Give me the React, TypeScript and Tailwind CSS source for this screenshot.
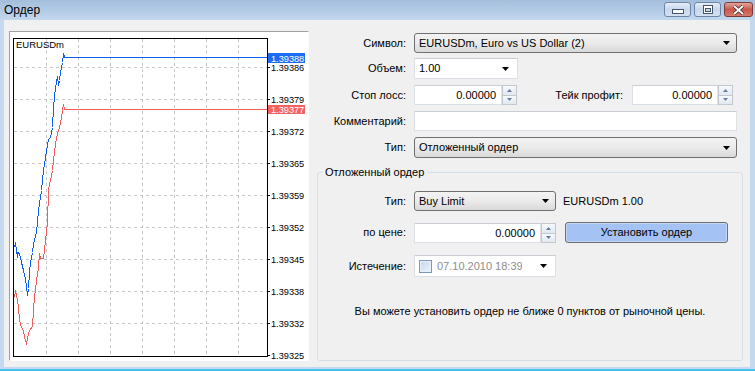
import clsx from 'clsx'

const blue: [number, number][] = [
  [14, 247], [15, 242], [16, 250], [17, 257], [17, 252], [19, 253], [21, 262], [23, 270], [25, 278], [27, 295],
  [28, 288], [29, 272], [30, 262], [32, 252], [33, 243], [36, 232], [38, 210], [41, 190], [42, 180], [43, 170],
  [45, 157], [48, 139], [50, 137], [52, 127], [53, 107], [55, 87], [57, 76], [58, 85], [59, 80], [60, 72],
  [62, 62], [63, 53], [64, 57], [267, 57],
]

const red: [number, number][] = [
  [14, 297], [15, 290], [16, 295], [17, 300], [18, 307], [19, 320], [21, 327], [23, 330], [24, 337], [26, 343],
  [28, 333], [30, 328], [32, 327], [33, 308], [34, 297], [36, 280], [38, 267], [39, 253], [40, 258], [43, 258],
  [45, 240], [47, 222], [48, 190], [49, 183], [50, 180], [52, 170], [53, 160], [55, 143], [57, 133], [58, 130],
  [60, 123], [62, 110], [63, 104], [64, 109], [267, 109],
]

const ticks: [number, string][] = [
  [67, '1.39386'], [99, '1.39379'], [131, '1.39372'], [163, '1.39365'], [195, '1.39359'],
  [227, '1.39352'], [259, '1.39345'], [291, '1.39338'], [323, '1.39332'], [355, '1.39325'],
]

const vgrid = [46, 78, 110, 142, 174, 206, 238]
const hgrid = [67, 99, 131, 163, 195, 227, 259, 291, 323]

const pts = (p: [number, number][]) => p.map(([x, y]) => `${x + 0.5},${y + 0.5}`).join(' ')

function Chart() {
  return (
    <div className="ml-[5px] mt-[11px] w-[300px] h-[330px] shrink-0 border border-[#a0a0a0] border-r-white border-b-white bg-white">
      <svg width={298} height={328} viewBox="10 32 298 328" className="block">
        {hgrid.map((y) => (
          <line key={y} x1={14} x2={267} y1={y + 0.5} y2={y + 0.5} stroke="#c6c6c6" strokeDasharray="3 3" />
        ))}
        {vgrid.map((x) => (
          <line key={x} x1={x + 0.5} x2={x + 0.5} y1={39} y2={356} stroke="#c6c6c6" strokeDasharray="3 3" />
        ))}
        <polyline points={pts(red)} fill="none" stroke="#f25c5c" shapeRendering="crispEdges" />
        <polyline points={pts(blue)} fill="none" stroke="#0c5ff2" shapeRendering="crispEdges" />
        <rect x={13.5} y={38.5} width={254} height={318} fill="none" stroke="#000" />
        {ticks.map(([y, t]) => (
          <g key={t}>
            <line x1={267} x2={270} y1={y + 0.5} y2={y + 0.5} stroke="#000" />
            <text x={271} y={y + 3.5} fontSize={9.2} fill="#000">
              {t}
            </text>
          </g>
        ))}
        <rect x={268} y={53} width={37} height={10} fill="#1b6cf0" />
        <text x={271} y={61.5} fontSize={9.2} fill="#fff">
          1.39388
        </text>
        <rect x={268} y={105} width={37} height={9} fill="#f46262" />
        <text x={271} y={112.5} fontSize={9.2} fill="#fff">
          1.39377
        </text>
        <text x={16} y={48} fontSize={9.5} fill="#000">
          EURUSDm
        </text>
      </svg>
    </div>
  )
}

const Arrow = () => (
  <svg width="7" height="4" viewBox="0 0 7 4" className="shrink-0">
    <path d="M0 0h7L3.5 4z" fill="#000" />
  </svg>
)

function Select({ value, className }: { value: string; className?: string }) {
  return (
    <div
      className={clsx(
        'h-full flex items-center justify-between rounded-[3px] border border-[#707070] bg-linear-to-b from-[#f3f3f3] via-[#ebebeb] to-[#d9d9d9] pl-[4px] pr-[6px]',
        className,
      )}
    >
      <span>{value}</span>
      <Arrow />
    </div>
  )
}

function Spin() {
  return (
    <div className="w-[15px] h-full flex flex-col border border-[#c2c8d0] bg-[#f2f4f7]">
      <div className="flex-1 flex items-center justify-center border-b border-[#c2c8d0] bg-linear-to-b from-[#f7f9fb] to-[#e3e9f0]">
        <svg width="5" height="3" viewBox="0 0 5 3">
          <path d="M0 3h5L2.5 0z" fill="#5d7ca6" />
        </svg>
      </div>
      <div className="flex-1 flex items-center justify-center bg-linear-to-b from-[#f7f9fb] to-[#e3e9f0]">
        <svg width="5" height="3" viewBox="0 0 5 3">
          <path d="M0 0h5L2.5 3z" fill="#5d7ca6" />
        </svg>
      </div>
    </div>
  )
}

const box = 'bg-white border border-[#dde1e7] border-t-[#c9cdd4]'

function NumInput({ w }: { w: string }) {
  return (
    <div className="h-full flex">
      <div className={clsx(box, w, 'h-full flex items-center justify-end pr-[5px]')}>0.00000</div>
      <Spin />
    </div>
  )
}

function Row({ label, lw = 'w-[89px]', className, children }: { label: string; lw?: string; className?: string; children: React.ReactNode }) {
  return (
    <div className={clsx('flex items-center gap-[8px]', className)}>
      <div className={clsx(lw, 'shrink-0 text-right')}>{label}</div>
      {children}
    </div>
  )
}

function CaptionButton({ kind }: { kind: 'min' | 'max' | 'close' }) {
  if (kind === 'close')
    return (
      <div className="w-[29px] h-[15px] rounded-[3px] border border-[#7a3a35] bg-linear-to-b from-[#e3a59d] via-[#c9574b] to-[#d6796b] flex items-center justify-center">
        <svg width="13" height="10" viewBox="0 0 13 10">
          <path d="M2 1l4.5 4L11 1M2 9l4.5-4L11 9" stroke="#3d2a2a" strokeWidth="3.4" fill="none" />
          <path d="M2 1l4.5 4L11 1M2 9l4.5-4L11 9" stroke="#fff" strokeWidth="1.8" fill="none" />
        </svg>
      </div>
    )
  return (
    <div className="w-[27px] h-[15px] rounded-[3px] border border-[#6d86a6] bg-linear-to-b from-[#e4edf7] via-[#c7d8ec] to-[#d3e2f2] flex items-center justify-center">
      {kind === 'min' ? (
        <svg width="12" height="6" viewBox="0 0 12 6" className="mt-[5px]">
          <rect x="0.5" y="0.5" width="11" height="4" fill="#fff" stroke="#44546a" />
        </svg>
      ) : (
        <svg width="10" height="9" viewBox="0 0 10 9">
          <rect x="0.5" y="0.5" width="9" height="8" fill="#fff" stroke="#44546a" />
          <rect x="2.5" y="3.5" width="5" height="3" fill="#c7d8ec" stroke="#44546a" />
        </svg>
      )}
    </div>
  )
}

export default function App() {
  return (
    <div className="w-[755px] h-[371px] flex flex-col overflow-hidden bg-[#c5d9ee] text-[11px] leading-[13px] text-black font-['Liberation_Sans',Arial,sans-serif]">
      <div className="h-[20px] shrink-0 flex items-center justify-between pl-[4px] pr-[2px] bg-linear-to-b from-[#a3bedc] to-[#c3d8ee]">
        <span className="text-[12px]">Ордер</span>
        <div className="flex gap-[3px] self-start mt-[2px]">
          <CaptionButton kind="min" />
          <CaptionButton kind="max" />
          <CaptionButton kind="close" />
        </div>
      </div>
      <div className="flex-1 flex ml-[4px] mr-[5px] bg-[#f0f0f0]">
        <Chart />
        <div className="ml-[8px] w-[427px] flex flex-col">
          <Row label="Символ:" className="mt-[13px] h-[20px]">
            <Select value="EURUSDm, Euro vs US Dollar (2)" className="w-[323px]" />
          </Row>
          <Row label="Объем:" className="mt-[5px] h-[21px]">
            <div className={clsx(box, 'w-[104px] h-full flex items-center justify-between pl-[4px] pr-[8px]')}>
              <span>1.00</span>
              <Arrow />
            </div>
          </Row>
          <Row label="Стоп лосс:" className="mt-[6px] h-[20px]">
            <NumInput w="w-[88px]" />
            <div className="w-[98px] shrink-0 text-right">Тейк профит:</div>
            <div className="ml-[1px] h-full">
              <NumInput w="w-[86px]" />
            </div>
          </Row>
          <Row label="Комментарий:" className="mt-[6px] h-[20px]">
            <div className={clsx(box, 'w-[323px] h-full')} />
          </Row>
          <Row label="Тип:" className="mt-[6px] h-[21px]">
            <Select value="Отложенный ордер" className="w-[323px]" />
          </Row>
          <fieldset className="mt-[8px] mb-[6px] mr-[1px] flex-1 rounded-[3px] border border-[#d5dfe5]">
            <legend className="ml-[4px] px-[3px]">Отложенный ордер</legend>
            <div className="flex flex-col">
              <Row label="Тип:" lw="w-[88px]" className="mt-[12px] h-[20px]">
                <Select value="Buy Limit" className="w-[142px]" />
                <span className="ml-[-1px]">EURUSDm 1.00</span>
              </Row>
              <Row label="по цене:" lw="w-[88px]" className="mt-[11px] h-[21px]">
                <div className="h-[20px] mt-[1px]">
                  <NumInput w="w-[127px]" />
                </div>
                <button className="ml-[1px] w-[163px] h-full rounded-[3px] border border-[#6f6f6f] bg-[#a5c2f5] shadow-[inset_0_0_0_1px_#c4d7f8] text-[11px] leading-[13px]">
                  Установить ордер
                </button>
              </Row>
              <Row label="Истечение:" lw="w-[88px]" className="mt-[12px] h-[22px]">
                <div className={clsx(box, 'w-[142px] h-full flex items-center pl-[4px] pr-[8px]')}>
                  <div className="w-[13px] h-[13px] shrink-0 border border-[#7e97bb] bg-linear-to-br from-[#c3d7f0] to-[#eef4fb] shadow-[inset_0_0_0_1px_#e8f0fa]" />
                  <span className="ml-[5px] w-[85px] overflow-hidden whitespace-nowrap text-[#8d8d8d]">07.10.2010 18:39</span>
                  <div className="ml-auto">
                    <Arrow />
                  </div>
                </div>
              </Row>
              <div className="mt-[28px] text-center">Вы можете установить ордер не ближе 0 пунктов от рыночной цены.</div>
            </div>
          </fieldset>
        </div>
      </div>
      <div className="h-[2px] shrink-0" />
      <div className="h-[2px] shrink-0 bg-[#45c3ec]" />
    </div>
  )
}
